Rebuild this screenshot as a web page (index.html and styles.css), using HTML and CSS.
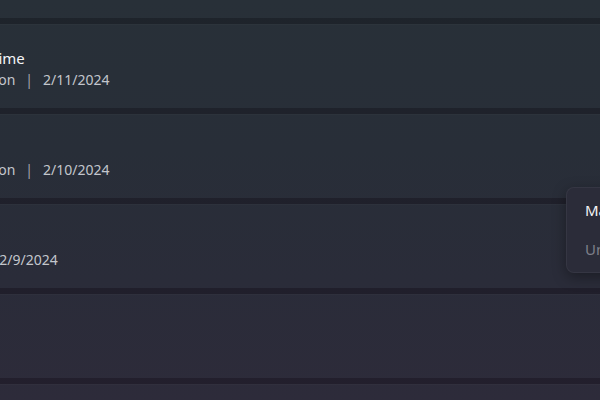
FILE: index.html
```html
<!DOCTYPE html>
<html lang="en">
<head>
<meta charset="utf-8">
<title>Requests</title>
<link rel="stylesheet" href="styles.css">
</head>
<body>
<div class="viewport">
  <ul class="list">
    <li class="card card-empty"></li>
    <li class="card">
      <div class="title">Overtime</div>
      <div class="meta"><span class="cat">Vacation</span><span class="sep">|</span><span class="date">2/11/2024</span></div>
    </li>
    <li class="card">
      <div class="title">Trip</div>
      <div class="meta"><span class="cat">Vacation</span><span class="sep">|</span><span class="date">2/10/2024</span></div>
    </li>
    <li class="card">
      <div class="title">Sick</div>
      <div class="meta"><span class="cat">IT</span><span class="sep">|</span><span class="date">2/9/2024</span></div>
    </li>
    <li class="card card-empty"></li>
    <li class="card card-empty"></li>
  </ul>
  <div class="menu">
    <div class="menu-item">Mark as approved</div>
    <div class="menu-item muted">Undo</div>
  </div>
</div>
</body>
</html>
```

FILE: styles.css
```css
html, body {
  margin: 0;
  padding: 0;
}
body {
  width: 600px;
  height: 400px;
  overflow: hidden;
  font-family: "Noto Sans", "Open Sans", sans-serif;
  background: linear-gradient(180deg, #1e242b 0%, #201f2b 70%, #231f2d 100%);
}
.viewport {
  position: relative;
  width: 600px;
  height: 400px;
  overflow: hidden;
}
.list {
  list-style: none;
  margin: -66px 0 0 -41px;
  padding: 0;
  display: flex;
  flex-direction: column;
  gap: 6px;
}
.card {
  height: 84px;
  box-sizing: border-box;
  padding: 23px 0 0 0;
  background: linear-gradient(180deg, #283038 0px, #282e38 150px, #2a2c39 280px, #2d2b3a 400px) fixed;
  border-top: 1px solid rgba(255, 255, 255, 0.02);
}
.title {
  font-size: 15px;
  line-height: 20px;
  color: #f4f5f7;
  white-space: nowrap;
}
.meta {
  margin-top: 3px;
  font-size: 14px;
  line-height: 18px;
  color: #c3c6cc;
  display: flex;
  align-items: center;
  white-space: nowrap;
}
.sep {
  margin: 0 10px;
  color: #a3a6ad;
}
.menu {
  position: absolute;
  left: 566px;
  top: 187px;
  width: 160px;
  height: 86px;
  box-sizing: border-box;
  padding: 12px 18px;
  background: #2b2c39;
  border: 1px solid rgba(255, 255, 255, 0.05);
  border-radius: 8px;
  box-shadow: 0 4px 14px rgba(0, 0, 0, 0.35);
  display: flex;
  flex-direction: column;
  gap: 19px;
}
.menu-item {
  font-size: 15px;
  line-height: 20px;
  color: #f2f3f5;
  white-space: nowrap;
}
.menu-item.muted {
  color: #7d7f8a;
}
```
